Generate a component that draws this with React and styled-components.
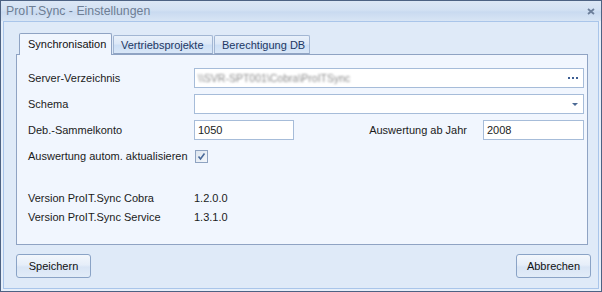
import React from "react";
import styled, { createGlobalStyle } from "styled-components";

const Global = createGlobalStyle`
  html, body { margin: 0; padding: 0; background: #fff; }
  body { font-family: "Liberation Sans", Arial, sans-serif; font-size: 11px; color: #1b1b1b; }
  * { box-sizing: border-box; }
`;

const tabs = [
  { label: "Synchronisation", width: 93, active: true },
  { label: "Vertriebsprojekte", width: 100 },
  { label: "Berechtigung DB", width: 96 },
];

const Window = styled.div`
  width: 602px;
  height: 292px;
  border: 1px solid #4d6283;
  background: #e6effa;
  display: flex;
  flex-direction: column;
  padding: 0 2px 2px;
`;
const TitleBar = styled.div`
  height: 20px;
  margin: 0 -2px;
  flex: none;
  display: flex;
  align-items: center;
  justify-content: space-between;
  padding: 0 6px 0 5px;
  background: linear-gradient(#dce7f5 0%, #d3e1f3 45%, #c9daf0 55%, #d8e5f5 100%);
`;
const Title = styled.span`
  font-size: 12.3px;
  color: #6e7e94;
  line-height: 20px;
`;
const Body = styled.div`
  flex: 1;
  border: 1px solid #a9c5ea;
  background: #dfeaf8;
  padding: 11px 10px 0 12px;
  display: flex;
  flex-direction: column;
`;
const TabStrip = styled.div`
  display: flex;
  align-items: flex-end;
  gap: 1px;
  padding-left: 3px;
  height: 21px;
  position: relative;
  z-index: 1;
`;
const Tab = styled.div`
  width: ${(p) => p.$w}px;
  height: ${(p) => (p.$active ? "22px" : "19px")};
  margin-bottom: ${(p) => (p.$active ? "-1px" : "0")};
  padding: ${(p) => (p.$active ? "0 0 2px 8px" : "0 0 0 7px")};
  display: flex;
  align-items: center;
  border: 1px solid ${(p) => (p.$active ? "#8fa3c3" : "#a2b6d3")};
  border-bottom: ${(p) => (p.$active ? "none" : "1px solid #8fa3c3")};
  border-radius: 2px 2px 0 0;
  background: ${(p) =>
    p.$active ? "#f1f6fe" : "linear-gradient(#e9f1fb 0%, #dde8f7 45%, #cddff5 55%, #d9e7f8 100%)"};
  color: ${(p) => (p.$active ? "#111" : "#1d3763")};
  white-space: nowrap;
`;
const Panel = styled.div`
  height: 191px;
  border: 1px solid #8fa3c3;
  background: #f1f6fe;
  padding: 13px 3px 0 11px;
  display: flex;
  flex-direction: column;
  gap: 6px;
`;
const Row = styled.div`
  display: flex;
  align-items: center;
  height: ${(p) => p.$h || 20}px;
  margin-top: ${(p) => p.$mt || 0}px;
`;
const Label = styled.div`
  width: 166px;
  flex: none;
  white-space: nowrap;
`;
const Input = styled.div`
  height: 20px;
  width: ${(p) => (p.$w ? `${p.$w}px` : "auto")};
  flex: ${(p) => (p.$w ? "none" : "1")};
  border: 1px solid #a6bcd9;
  background: #fff;
  display: flex;
  align-items: center;
  padding: 0 3px;
  position: relative;
`;
const Blurred = styled.span`
  color: #8a8a8a;
  filter: blur(1.1px);
  font-size: 10.5px;
`;
const SideLabel = styled.div`
  margin-left: auto;
  margin-right: 16px;
  white-space: nowrap;
`;
const Dots = styled.span`
  position: absolute;
  right: 5px;
  top: 8px;
  display: flex;
  gap: 2px;
  span { width: 2px; height: 2px; background: #3d5f93; }
`;
const Arrow = styled.span`
  position: absolute;
  right: 5px;
  top: 8px;
  width: 0;
  height: 0;
  border-left: 3px solid transparent;
  border-right: 3px solid transparent;
  border-top: 3px solid #4c6a95;
`;
const Check = styled.div`
  width: 13px;
  height: 13px;
  border: 1px solid #8fa3c1;
  background: linear-gradient(135deg, #dde5ef, #f4f7fb);
  display: flex;
  align-items: center;
  justify-content: center;
  margin-left: 1px;
`;
const Footer = styled.div`
  display: flex;
  justify-content: space-between;
  padding: 9px 0 0 0;
  margin-right: -3px;
`;
const Button = styled.button`
  width: 75px;
  height: 24px;
  font: inherit;
  color: #111;
  border: 1px solid #8aa3c6;
  border-radius: 3px;
  background: linear-gradient(#f3f7fc 0%, #e6eef9 45%, #d9e5f5 55%, #e2ecf8 100%);
  padding: 0;
`;

export default function App() {
  return (
    <>
      <Global />
      <Window>
        <TitleBar>
          <Title>ProIT.Sync - Einstellungen</Title>
          <svg width="8" height="7" viewBox="0 0 8 7">
            <path d="M1 1 L7 6 M7 1 L1 6" stroke="#6d7f9b" strokeWidth="1.8" />
          </svg>
        </TitleBar>
        <Body>
          <TabStrip>
            {tabs.map((t) => (
              <Tab key={t.label} $active={t.active} $w={t.width}>{t.label}</Tab>
            ))}
          </TabStrip>
          <Panel>
            <Row>
              <Label>Server-Verzeichnis</Label>
              <Input>
                <Blurred>\\SVR-SPT001\Cobra\ProITSync</Blurred>
                <Dots><span /><span /><span /></Dots>
              </Input>
            </Row>
            <Row>
              <Label>Schema</Label>
              <Input><Arrow /></Input>
            </Row>
            <Row>
              <Label>Deb.-Sammelkonto</Label>
              <Input $w={100}>1050</Input>
              <SideLabel>Auswertung ab Jahr</SideLabel>
              <Input $w={101}>2008</Input>
            </Row>
            <Row>
              <Label>Auswertung autom. aktualisieren</Label>
              <Check>
                <svg width="9" height="9" viewBox="0 0 9 9">
                  <path d="M1.5 4.5 L3.5 7 L7.5 1.5" stroke="#4a6a9a" strokeWidth="1.6" fill="none" />
                </svg>
              </Check>
            </Row>
            <Row $h={19} $mt={16}>
              <Label>Version ProIT.Sync Cobra</Label>
              <span>1.2.0.0</span>
            </Row>
            <Row $h={19} $mt={-6}>
              <Label>Version ProIT.Sync Service</Label>
              <span>1.3.1.0</span>
            </Row>
          </Panel>
          <Footer>
            <Button>Speichern</Button>
            <Button>Abbrechen</Button>
          </Footer>
        </Body>
      </Window>
    </>
  );
}
